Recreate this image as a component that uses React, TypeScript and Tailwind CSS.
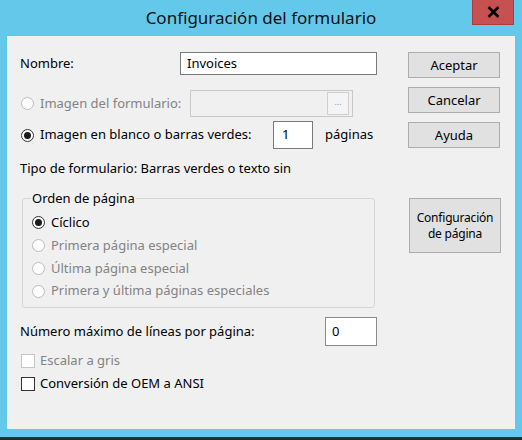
import React from "react";

function Radio({ checked, disabled }: { checked?: boolean; disabled?: boolean }) {
  return (
    <span
      className={`flex h-[13px] w-[13px] shrink-0 items-center justify-center rounded-full border bg-white ${
        disabled ? "border-[#bcbcbc]" : "border-[#333333]"
      }`}
    >
      {checked && <span className="h-[7px] w-[7px] rounded-full bg-[#1a1a1a]" />}
    </span>
  );
}

function Check({ disabled }: { disabled?: boolean }) {
  return (
    <span
      className={`block h-[14px] w-[14px] shrink-0 border bg-white ${
        disabled ? "border-[#c6c6c6]" : "border-[#333333]"
      }`}
    />
  );
}

function Btn({ children, cls }: { children: React.ReactNode; cls?: string }) {
  return (
    <div
      className={`flex w-[92px] items-center justify-center border border-[#adadad] bg-[#e1e1e1] text-center text-[13px] leading-[16px] text-black ${cls ?? "h-[26px]"}`}
    >
      {children}
    </div>
  );
}

export default function App() {
  return (
    <div className="flex h-[440px] w-[522px] flex-col bg-[#64c8ea] font-['Noto_Sans',sans-serif] text-[13px] text-black">
      {/* Title bar */}
      <div className="relative flex h-[36px] shrink-0 items-start justify-center">
        <div className="pt-[7px] text-[17px] leading-[22px] text-[#111]">Configuración del formulario</div>
        <div className="absolute right-[8px] top-0 flex h-[25px] w-[42px] items-center justify-center border border-[#b03a3a] border-t-0 bg-[#c75050]">
          <svg width="13" height="12" viewBox="0 0 13 12">
            <path d="M1.5 1 L11.5 11 M11.5 1 L1.5 11" stroke="#000" strokeWidth="2.6" />
          </svg>
        </div>
      </div>

      {/* Client area */}
      <div className="mx-[7px] flex h-[393px] shrink-0 bg-[#f0f0f0] pl-[13px] pt-[16px]">
        {/* Left column */}
        <div className="flex w-[357px] flex-col">
          <div className="flex h-[23px] items-center">
            <span className="w-[160px]">Nombre:</span>
            <div className="flex h-[23px] w-[197px] items-center border border-[#7a7a7a] bg-white pl-[6px]">Invoices</div>
          </div>

          <div className="mt-[15px] flex h-[27px] items-center">
            <div className="ml-[1px] flex"><Radio disabled /></div>
            <span className="ml-[6px] w-[150px] text-[#838383]">Imagen del formulario:</span>
            <div className="flex h-[27px] w-[163px] items-center justify-end border border-[#c9c9c9] bg-[#f0f0f0] pr-[3px]">
              <div className="flex h-[23px] w-[22px] items-center justify-center border border-[#cfcfcf] bg-[#f4f4f4] pb-[3px] text-[9px] text-[#999]">...</div>
            </div>
          </div>

          <div className="mt-[4px] flex h-[28px] items-center">
            <div className="ml-[1px] flex"><Radio checked /></div>
            <span className="ml-[6px] w-[233px]">Imagen en blanco o barras verdes:</span>
            <div className="flex h-[28px] w-[40px] items-center border border-[#7a7a7a] bg-white pl-[8px]">1</div>
            <span className="ml-[12px]">páginas</span>
          </div>

          <div className="mt-[11px] leading-[16px]">Tipo de formulario: Barras verdes o texto sin</div>

          <fieldset className="ml-[2px] mt-[14px] h-[118px] w-[353px] rounded-[3px] border border-[#d5d5d5] pl-[9px]">
            <legend className="ml-[-1px] px-[1px] leading-[16px]">Orden de página</legend>
            <div className="mt-[5px] flex flex-col">
              <div className="flex h-[23px] items-center">
                <Radio checked />
                <span className="ml-[6px]">Cíclico</span>
              </div>
              <div className="flex h-[23px] items-center text-[#838383]">
                <Radio disabled />
                <span className="ml-[6px]">Primera página especial</span>
              </div>
              <div className="flex h-[23px] items-center text-[#838383]">
                <Radio disabled />
                <span className="ml-[6px]">Última página especial</span>
              </div>
              <div className="flex h-[22px] items-center text-[#838383]">
                <Radio disabled />
                <span className="ml-[6px]">Primera y última páginas especiales</span>
              </div>
            </div>
          </fieldset>

          <div className="mt-[9px] flex h-[29px] items-center justify-between">
            <span>Número máximo de líneas por página:</span>
            <div className="flex h-[29px] w-[52px] items-center border border-[#8a8a8a] bg-white pl-[6px]">0</div>
          </div>

          <div className="mt-[3px] flex h-[23px] items-center text-[#838383]">
            <div className="ml-[1px] flex"><Check disabled /></div>
            <span className="ml-[5px]">Escalar a gris</span>
          </div>
          <div className="flex h-[23px] items-center">
            <div className="ml-[1px] flex"><Check /></div>
            <span className="ml-[5px]">Conversión de OEM a ANSI</span>
          </div>
        </div>

        {/* Right column */}
        <div className="ml-[31px] flex flex-col gap-[9px]">
          <Btn>Aceptar</Btn>
          <Btn>Cancelar</Btn>
          <Btn>Ayuda</Btn>
          <div className="mt-[41px] ml-[1px]">
            <Btn cls="h-[55px] border-[#3c7fb1]">
              <span className="text-[12px] leading-[16px] tracking-[-0.2px]">
                Configuración
                <br />
                de página
              </span>
            </Btn>
          </div>
        </div>
      </div>

      <div className="h-[8px] shrink-0" />
      <div className="h-[3px] shrink-0 bg-[#2b2b2b]" />
    </div>
  );
}
